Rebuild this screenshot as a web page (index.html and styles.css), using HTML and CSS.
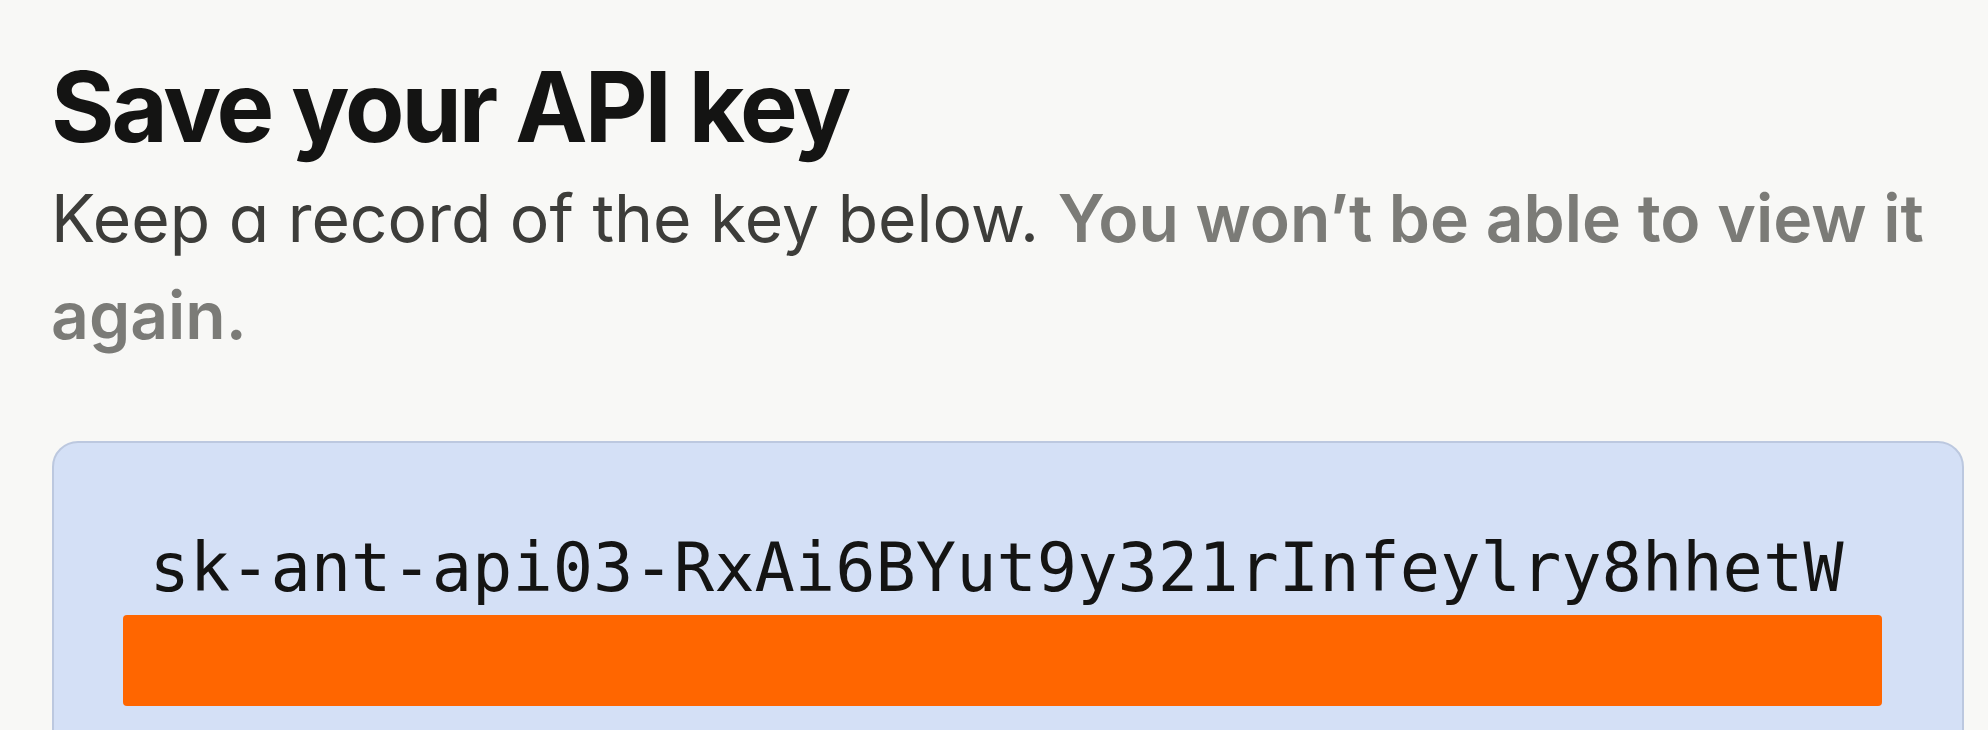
FILE: index.html
```html
<!DOCTYPE html>
<html lang="en">
<head>
<meta charset="utf-8">
<title>Save your API key</title>
<link rel="stylesheet" href="styles.css">
</head>
<body>
<main class="page">
  <h1 class="title">Save your API key</h1>
  <p class="subtitle"><span class="lead">Keep a record of the key below.</span> <span class="warn">You won’t be able to view it again.</span></p>
  <section class="keybox">
    <div class="key">sk-ant-api03-RxAi6BYut9y321rInfeylry8hhetW</div>
    <div class="redact"></div>
  </section>
</main>
</body>
</html>
```
FILE: styles.css
```css
html, body {
  margin: 0;
  padding: 0;
  background: #f8f8f6;
  overflow: hidden;
}

.page {
  padding: 58px 24px 0 51px;
  box-sizing: border-box;
  width: 1988px;
  height: 730px;
  overflow: hidden;
}

.title {
  margin: 0;
  font-family: "Inter", "Liberation Sans", sans-serif;
  font-weight: 700;
  font-size: 97px;
  line-height: 97px;
  letter-spacing: -3px;
  color: #141413;
}

.subtitle {
  margin: 15px 0 0 0;
  font-family: "Inter", "Liberation Sans", sans-serif;
  font-size: 66px;
  line-height: 97px;
  color: #3d3d3a;
}

.lead {
  font-weight: 400;
  font-feature-settings: "cv11" 1;
}

.warn {
  font-weight: 600;
  color: #7b7b77;
}

.keybox {
  margin: 77px 0 0 1px;
  background: #d4e0f6;
  border: 2px solid #bcc8df;
  border-radius: 26px;
  padding: 92px 80px 80px 69px;
  text-align: center;
}

.key {
  font-family: "DejaVu Sans Mono", "Liberation Mono", monospace;
  font-size: 67px;
  line-height: 67px;
  color: #141413;
  white-space: nowrap;
  padding-right: 12px;
}

.redact {
  margin-top: 13px;
  height: 91px;
  background: #ff6600;
  border-radius: 4px;
}
```
